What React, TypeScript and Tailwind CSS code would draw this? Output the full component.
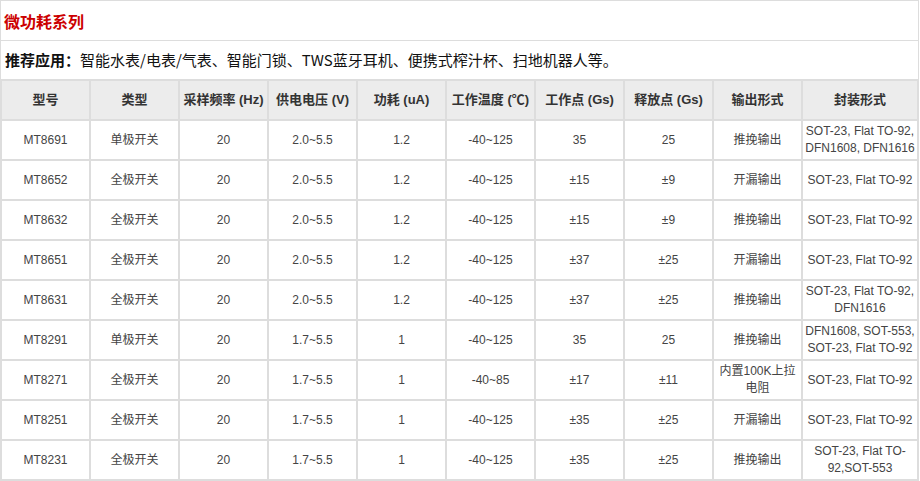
const rows: string[][] = [
  ["MT8691", "单极开关", "20", "2.0~5.5", "1.2", "-40~125", "35", "25", "推挽输出", "SOT-23, Flat TO-92,|DFN1608, DFN1616"],
  ["MT8652", "全极开关", "20", "2.0~5.5", "1.2", "-40~125", "±15", "±9", "开漏输出", "SOT-23, Flat TO-92"],
  ["MT8632", "全极开关", "20", "2.0~5.5", "1.2", "-40~125", "±15", "±9", "推挽输出", "SOT-23, Flat TO-92"],
  ["MT8651", "全极开关", "20", "2.0~5.5", "1.2", "-40~125", "±37", "±25", "开漏输出", "SOT-23, Flat TO-92"],
  ["MT8631", "全极开关", "20", "2.0~5.5", "1.2", "-40~125", "±37", "±25", "推挽输出", "SOT-23, Flat TO-92,|DFN1616"],
  ["MT8291", "单极开关", "20", "1.7~5.5", "1", "-40~125", "35", "25", "推挽输出", "DFN1608, SOT-553,|SOT-23, Flat TO-92"],
  ["MT8271", "全极开关", "20", "1.7~5.5", "1", "-40~85", "±17", "±11", "内置100K上拉|电阻", "SOT-23, Flat TO-92"],
  ["MT8251", "全极开关", "20", "1.7~5.5", "1", "-40~125", "±35", "±25", "开漏输出", "SOT-23, Flat TO-92"],
  ["MT8231", "全极开关", "20", "1.7~5.5", "1", "-40~125", "±35", "±25", "推挽输出", "SOT-23, Flat TO-|92,SOT-553"],
];

const headers = [
  "型号",
  "类型",
  "采样频率 (Hz)",
  "供电电压 (V)",
  "功耗 (uA)",
  "工作温度 (℃)",
  "工作点 (Gs)",
  "释放点 (Gs)",
  "输出形式",
  "封装形式",
];

const Cell = ({ text }: { text: string }) => {
  const lines = text.split("|");
  return (
    <div className="h-[38px] bg-white flex items-center justify-center text-center px-[2px] text-[12px] leading-[17px] text-[#444]">
      <div>
        {lines.map((l, i) => (
          <div key={i} className="whitespace-nowrap">
            {l}
          </div>
        ))}
      </div>
    </div>
  );
};

export default function App() {
  return (
    <div className="w-[919px] bg-white font-['Liberation_Sans','Noto_Sans_CJK_SC',sans-serif]">
      <div className="border-x border-t border-[#dddddd]">
        <div className="h-[40px] flex items-center px-[3px] border-b border-[#dddddd] text-[16px] font-bold text-[#cc0000] font-['Noto_Sans_CJK_SC',sans-serif]">
          微功耗系列
        </div>
        <div className="h-[38px] flex items-center px-[4px] text-[15px] text-[#111] font-['Noto_Sans_CJK_SC',sans-serif]">
          <span className="font-bold">推荐应用：</span>
          <span>智能水表/电表/气表、智能门锁、TWS蓝牙耳机、便携式榨汁杯、扫地机器人等。</span>
        </div>
      </div>
      <div className="grid grid-cols-[87px_87px_87px_87px_87px_87px_87px_87px_87px_114px] gap-[2px] p-[2px] bg-[#dddddd]">
        {headers.map((h) => (
          <div
            key={h}
            className="h-[38px] bg-[#ececec] flex items-center justify-center text-[13px] font-bold text-[#333] whitespace-nowrap"
          >
            {h}
          </div>
        ))}
        {rows.map((r) => r.map((c, i) => <Cell key={r[0] + i} text={c} />))}
      </div>
    </div>
  );
}
